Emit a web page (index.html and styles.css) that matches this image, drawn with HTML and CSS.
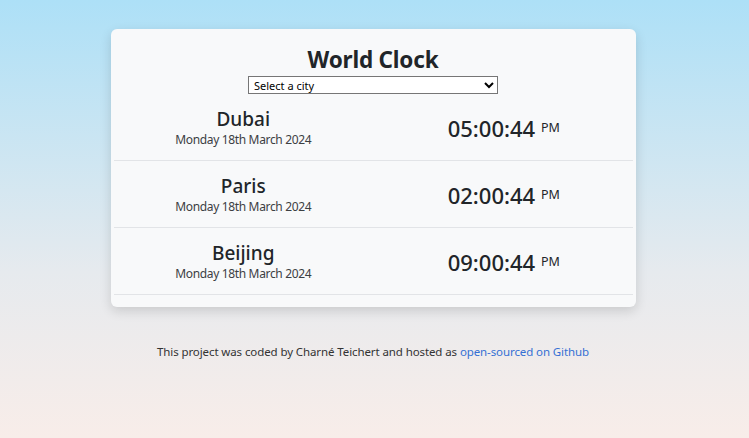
FILE: index.html
```html
<!DOCTYPE html>
<html lang="en">
<head>
<meta charset="utf-8">
<title>World Clock</title>
<link rel="stylesheet" href="styles.css">
</head>
<body>
<main class="page">
  <section class="card">
    <h1 class="title">World Clock</h1>
    <div class="select-wrap">
      <select class="city-select">
        <option>Select a city</option>
        <option>Dubai</option>
        <option>Paris</option>
        <option>Beijing</option>
      </select>
    </div>
    <div class="cities">
      <div class="city">
        <div class="col">
          <div class="name">Dubai</div>
          <div class="date">Monday 18th March 2024</div>
        </div>
        <div class="col">
          <div class="time">05:00:44 <small class="ampm">PM</small></div>
        </div>
      </div>
      <div class="city">
        <div class="col">
          <div class="name">Paris</div>
          <div class="date">Monday 18th March 2024</div>
        </div>
        <div class="col">
          <div class="time">02:00:44 <small class="ampm">PM</small></div>
        </div>
      </div>
      <div class="city">
        <div class="col">
          <div class="name">Beijing</div>
          <div class="date">Monday 18th March 2024</div>
        </div>
        <div class="col">
          <div class="time">09:00:44 <small class="ampm">PM</small></div>
        </div>
      </div>
    </div>
  </section>
  <footer class="footer">
    This project was coded by Charné Teichert and hosted as <a class="link" href="#">open-sourced on Github</a>
  </footer>
</main>
</body>
</html>
```

FILE: styles.css
```css
* { box-sizing: border-box; }
html, body { margin: 0; height: 100%; }
body {
  font-family: "Noto Sans", "Open Sans", sans-serif;
  color: #212529;
  background: linear-gradient(to bottom, #ade0f7 0%, #e6eaee 62%, #f8ede9 100%);
  min-height: 438px;
}
.page {
  display: flex;
  flex-direction: column;
  align-items: center;
  padding-top: 29px;
  padding-right: 3px;
}
.card {
  width: 525px;
  background: #f8f9fa;
  border-radius: 6px;
  box-shadow: 0 4px 12px rgba(0, 0, 0, 0.14);
  padding: 16px 3px 12px;
}
.title {
  margin: 0;
  text-align: center;
  font-size: 22.5px;
  line-height: 30px;
  font-weight: 700;
  letter-spacing: -0.2px;
}
.select-wrap {
  display: flex;
  justify-content: center;
  margin-top: 1px;
}
.city-select {
  width: 250px;
  height: 18px;
  font-family: "Noto Sans", sans-serif;
  font-size: 11px;
  padding: 0 1px;
  border: 1px solid #767676;
  border-radius: 0;
  background: #fff;
  color: #000;
}
.cities { margin-top: 0; }
.city {
  display: grid;
  grid-template-columns: 1fr 1fr;
  align-items: center;
  padding: 13px 0 11px;
  border-bottom: 1px solid #e2e4e7;
}
.col { text-align: center; }
.name {
  font-size: 19px;
  line-height: 24px;
  font-weight: 500;
}
.date {
  font-size: 12px;
  line-height: 18px;
  letter-spacing: -0.35px;
  color: #3c4043;
}
.time {
  font-size: 22px;
  line-height: 26px;
  padding-left: 2px;
  font-weight: 500;
}
.ampm {
  font-size: 12.5px;
  font-weight: 400;
  vertical-align: 5px;
}
.footer {
  margin-top: 37px;
  font-size: 11.5px;
  letter-spacing: -0.1px;
  color: #333;
}
.link {
  color: #3570d4;
  text-decoration: none;
}
```
